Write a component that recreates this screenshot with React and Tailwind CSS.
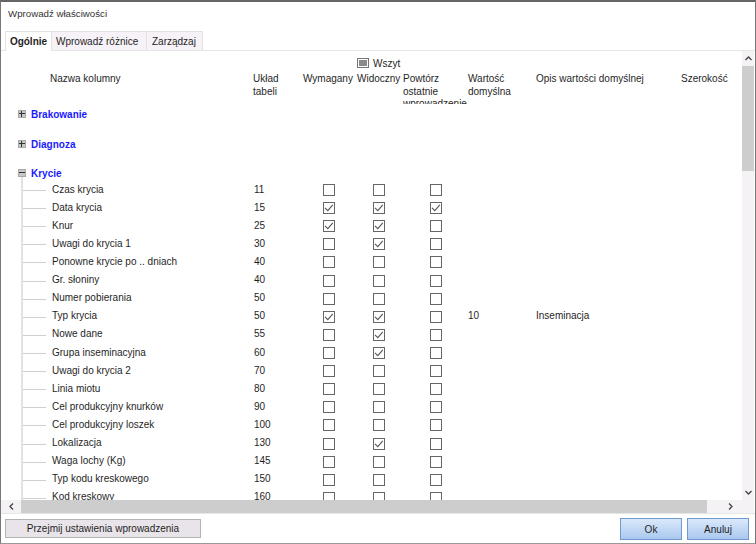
import React from "react";

const rows = [
  ["Czas krycia", "11", 0, 0, 0],
  ["Data krycia", "15", 1, 1, 1],
  ["Knur", "25", 1, 1, 0],
  ["Uwagi do krycia 1", "30", 0, 1, 0],
  ["Ponowne krycie po .. dniach", "40", 0, 0, 0],
  ["Gr. słoniny", "40", 0, 0, 0],
  ["Numer pobierania", "50", 0, 0, 0],
  ["Typ krycia", "50", 1, 1, 0, "10", "Inseminacja"],
  ["Nowe dane", "55", 0, 1, 0],
  ["Grupa inseminacyjna", "60", 0, 1, 0],
  ["Uwagi do krycia 2", "70", 0, 0, 0],
  ["Linia miotu", "80", 0, 0, 0],
  ["Cel produkcyjny knurków", "90", 0, 0, 0],
  ["Cel produkcyjny loszek", "100", 0, 0, 0],
  ["Lokalizacja", "130", 0, 1, 0],
  ["Waga lochy (Kg)", "145", 0, 0, 0],
  ["Typ kodu kreskowego", "150", 0, 0, 0],
  ["Kod kreskowy", "160", 0, 0, 0],
];

function Box({ on }) {
  return (
    <span className="block w-[12px] h-[12px] border border-[#666] bg-white relative">
      {on ? (
        <svg viewBox="0 0 10 10" className="absolute inset-0 w-full h-full" fill="none">
          <path d="M1 4.8 L3.8 7.6 L8.8 1.8" stroke="#555" strokeWidth="1.1" />
        </svg>
      ) : null}
    </span>
  );
}

function Expander({ open }) {
  return (
    <span className="relative z-10 block w-[8px] h-[8px] bg-[#c8c8c8] border border-[#a8a8a8]">
      <span className="absolute left-0 right-0 top-[2px] h-px bg-[#333]" />
      {open ? null : <span className="absolute top-0 bottom-0 left-[2px] w-px bg-[#333]" />}
    </span>
  );
}

function Group({ name, open, className }) {
  return (
    <div className={"flex items-center h-[18px] " + className}>
      <span className="w-[13px] ml-[17px] shrink-0">
        <Expander open={open} />
      </span>
      <span className="font-bold text-[#1a1aff]">{name}</span>
    </div>
  );
}

function Row({ r }) {
  return (
    <div className="flex items-center h-[18.12px] shrink-0">
      <span className="w-[22px] shrink-0" />
      <span className="w-[23px] h-px shrink-0 mt-[3px] bg-[#d0d0d0]" />
      <span className="w-[208px] pl-[6px] shrink-0 whitespace-nowrap">{r[0]}</span>
      <span className="w-[69px] shrink-0">{r[1]}</span>
      <span className="w-[50px] shrink-0 pt-[2px]"><Box on={r[2]} /></span>
      <span className="w-[57px] shrink-0 pt-[2px]"><Box on={r[3]} /></span>
      <span className="w-[38px] shrink-0 pt-[2px]"><Box on={r[4]} /></span>
      <span className="w-[68px] shrink-0">{r[5]}</span>
      <span className="shrink-0 whitespace-nowrap">{r[6]}</span>
    </div>
  );
}

export default function App() {
  return (
    <div className="w-[756px] h-[544px] bg-white overflow-hidden flex flex-col border-x border-[#777] border-t-2 border-t-[#666] border-b border-b-[#999] text-[#1f1f1f] text-[10px] font-['Liberation_Sans',Arial,sans-serif]">
      <div className="h-[24px] pl-[7px] flex items-center text-[#333] text-[9.7px] shrink-0 pt-[1px]">Wprowadź właściwości</div>

      <div className="flex items-end h-[25px] pl-[4px] border-b border-[#e6e6e6] shrink-0">
        <div className="h-[20px] w-[47px] bg-white border border-b-0 border-[#e2e2e2] font-bold flex items-center justify-center pb-[1px] mb-[-1px] relative">Ogólnie</div>
        <div className="h-[19px] w-[95px] pl-[4px] bg-[#f7f2f7] border-r border-t border-[#e2e2e2] flex items-center">Wprowadź różnice</div>
        <div className="h-[19px] w-[56px] pl-[5px] bg-[#f7f2f7] border-r border-t border-[#e2e2e2] flex items-center">Zarządzaj</div>
      </div>

      <div className="flex-1 min-h-0 flex flex-col border-b border-[#e6e6e6]">
        <div className="flex-1 min-h-0 flex">
          <div className="flex-1 min-w-0 overflow-hidden relative">
            <div className="flex items-center h-[17px] pl-[356px] pt-[7px]">
              <span className="w-[12px] h-[10px] border border-[#777] bg-white p-[1px] mr-[4px]">
                <span className="block w-full h-full bg-[#8a8a8a]" />
              </span>
              <span>Wszyt</span>
            </div>
            <div className="flex h-[36px] overflow-hidden leading-[12.5px] pt-[5px]">
              <span className="w-[49px] shrink-0" />
              <span className="w-[203px] shrink-0">Nazwa kolumny</span>
              <span className="w-[50px] shrink-0">Układ<br />tabeli</span>
              <span className="w-[54px] shrink-0 whitespace-nowrap">Wymagany</span>
              <span className="w-[46px] shrink-0 whitespace-nowrap">Widoczny</span>
              <span className="w-[65px] shrink-0 whitespace-nowrap overflow-hidden">Powtórz<br />ostatnie<br />wprowadzenie</span>
              <span className="w-[68px] shrink-0">Wartość<br />domyślna</span>
              <span className="w-[145px] shrink-0 whitespace-nowrap">Opis wartości domyślnej</span>
              <span className="shrink-0">Szerokość</span>
            </div>
            <Group name="Brakowanie" className="mt-[1px]" />
            <Group name="Diagnoza" className="mt-[12px]" />
            <Group name="Krycie" open className="mt-[11px]" />
            <div className="relative flex flex-col mt-[-2px]">
              <span className="absolute left-[20px] top-[-6px] bottom-0 w-[2px] bg-[#e2e2e2]" />
              {rows.map((r) => <Row key={r[0]} r={r} />)}
            </div>
          </div>
          <div className="w-[12px] shrink-0 bg-[#f5f2f5] flex flex-col items-center mr-[1px]">
            <span className="h-[15px] flex items-center justify-center">
              <svg width="7" height="5" viewBox="0 0 7 5" fill="none"><path d="M0.5 4 L3.5 1 L6.5 4" stroke="#444" strokeWidth="1.3" /></svg>
            </span>
            <span className="w-full h-[105px] bg-[#cdcdcd]" />
            <span className="flex-1" />
            <span className="h-[15px] flex items-center justify-center">
              <svg width="7" height="5" viewBox="0 0 7 5" fill="none"><path d="M0.5 1 L3.5 4 L6.5 1" stroke="#444" strokeWidth="1.3" /></svg>
            </span>
          </div>
        </div>
        <div className="h-[13px] shrink-0 flex items-center bg-[#f5f2f5] mr-[1px]">
          <span className="w-[20px] flex items-center justify-center">
            <svg width="5" height="7" viewBox="0 0 5 7" fill="none"><path d="M4 0.5 L1 3.5 L4 6.5" stroke="#444" strokeWidth="1.3" /></svg>
          </span>
          <span className="w-[686px] h-full bg-[#cdcdcd]" />
          <span className="flex-1 flex items-center justify-center">
            <svg width="5" height="7" viewBox="0 0 5 7" fill="none"><path d="M1 0.5 L4 3.5 L1 6.5" stroke="#444" strokeWidth="1.3" /></svg>
          </span>
        </div>
      </div>

      <div className="h-[29px] shrink-0 flex items-center pl-[4px] pr-[1px] pt-[1px]">
        <button className="w-[196px] h-[19px] mb-[1px] bg-[#e9e4e9] border border-[#b3b3b3]">Przejmij ustawienia wprowadzenia</button>
        <span className="flex-1" />
        <button className="w-[62px] h-[22px] mr-[5px] bg-gradient-to-b from-[#dbe8fa] to-[#a9c8ef] border border-[#6f9bd0]">Ok</button>
        <button className="w-[62px] h-[22px] mr-[5px] bg-gradient-to-b from-[#dbe8fa] to-[#a9c8ef] border border-[#6f9bd0]">Anuluj</button>
      </div>
    </div>
  );
}
